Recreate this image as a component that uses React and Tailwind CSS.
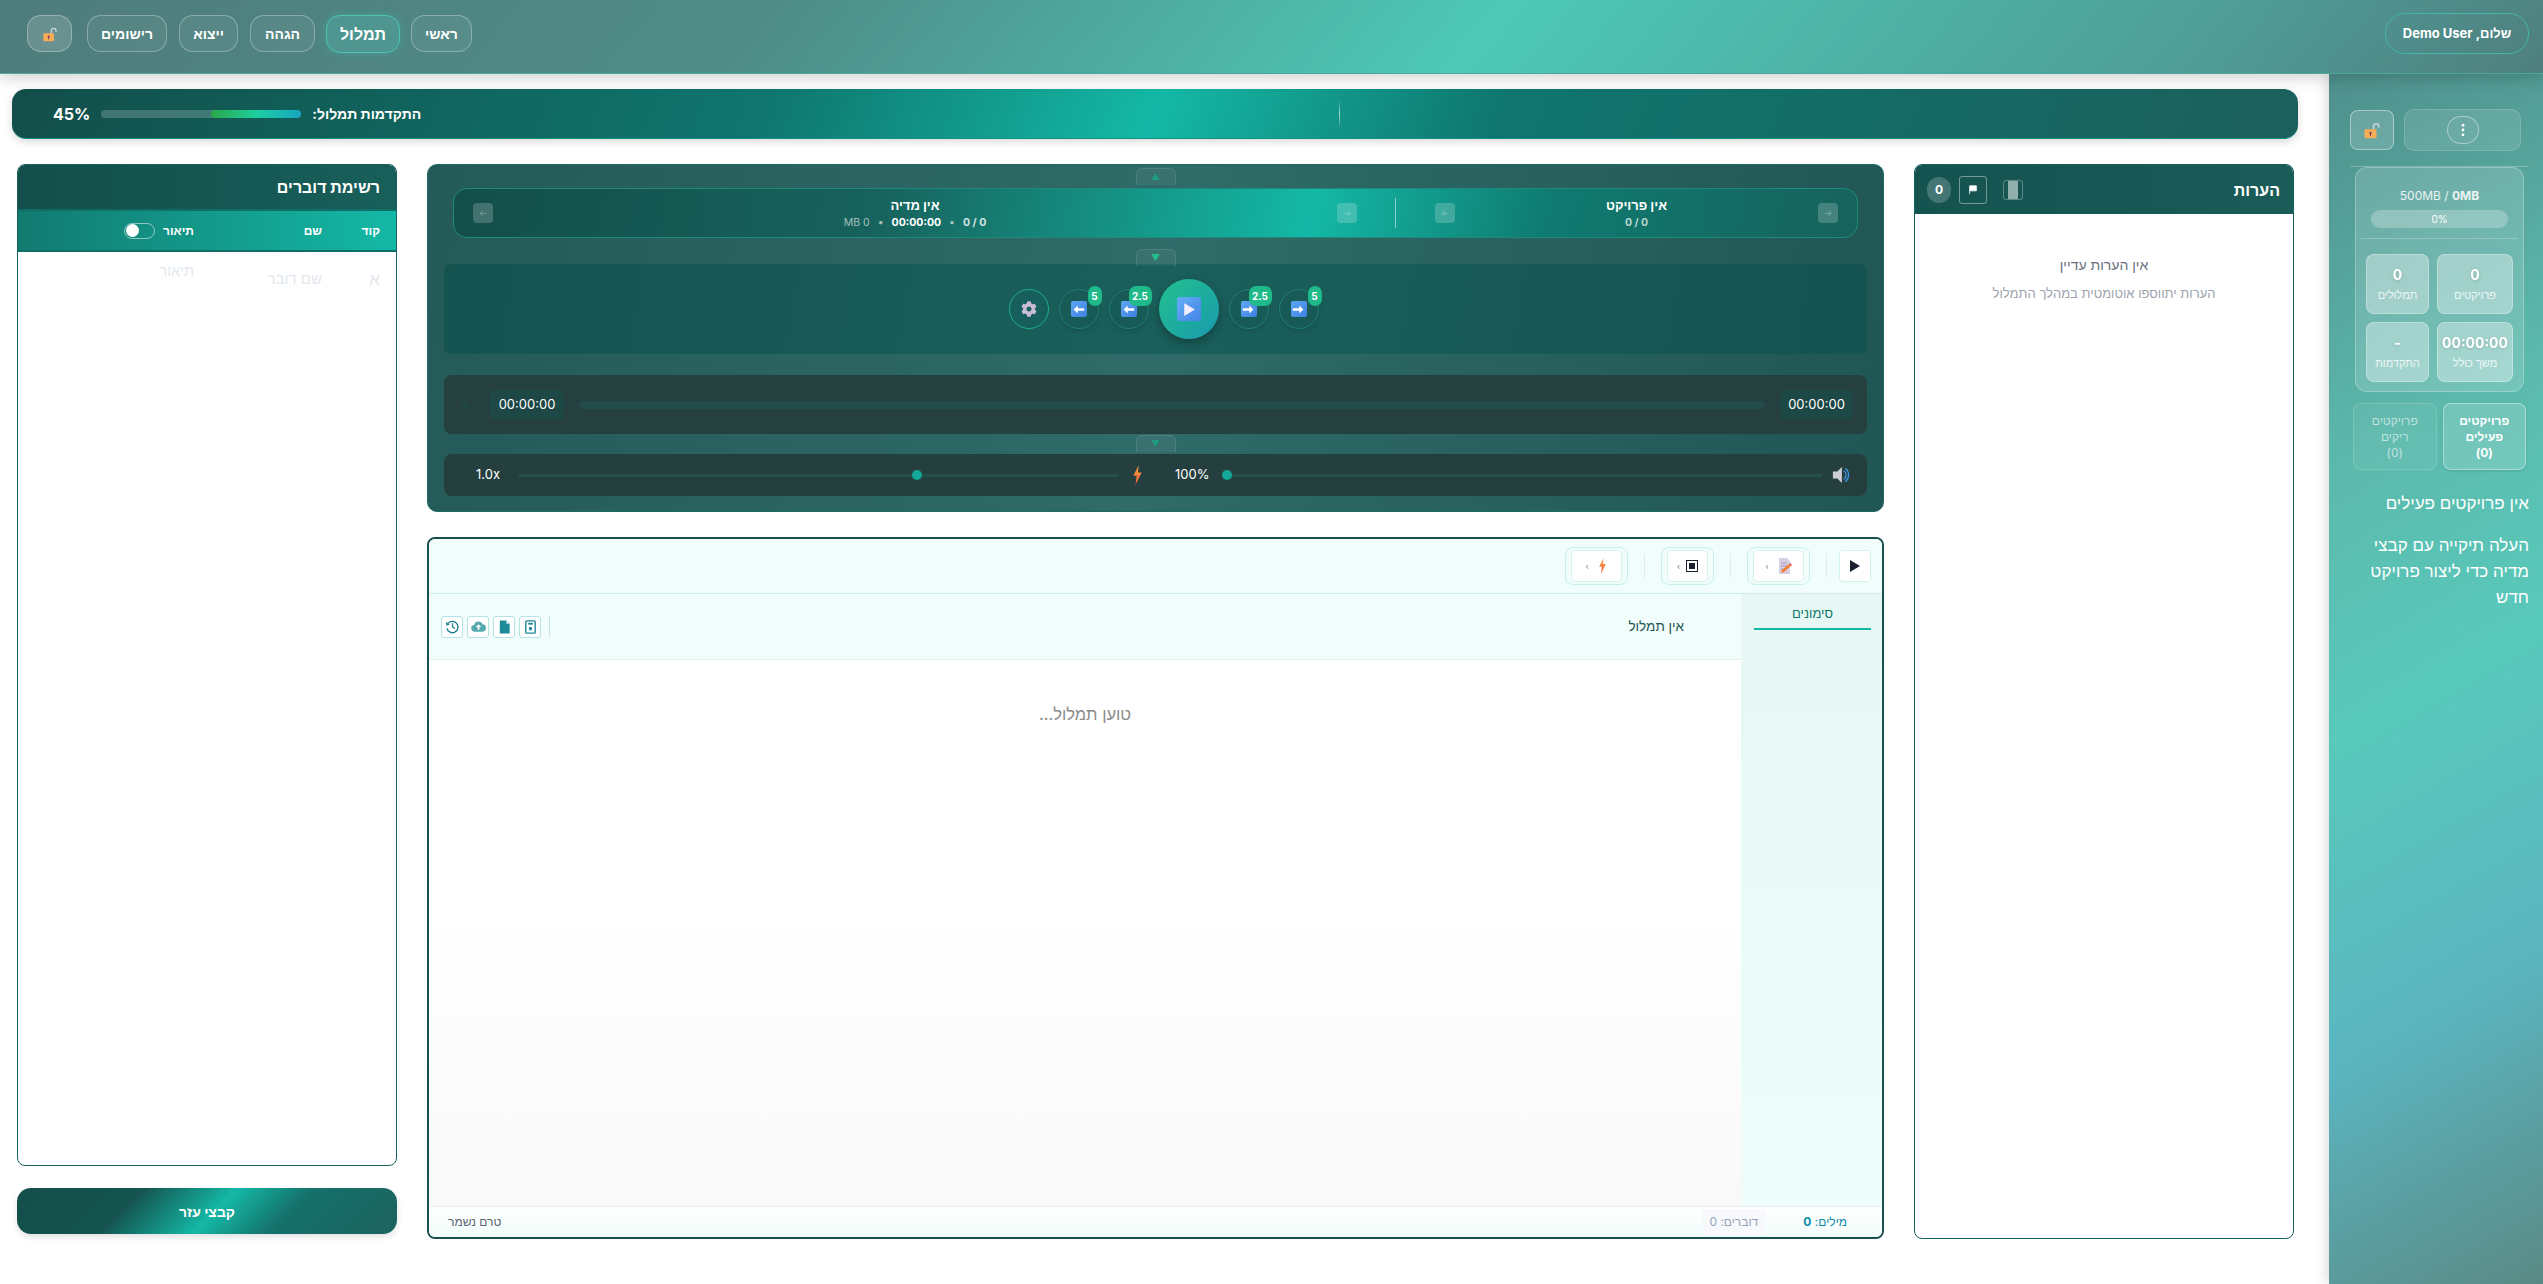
import { FaCog } from "react-icons/fa";

const PLAYER_BTN = "w-[40px] h-[40px] rounded-full flex items-center justify-center";

function UnlockIcon({ className }) {
  return (
    <svg viewBox="0 0 24 24" className={className}>
      <path d="M14 11V7a3.5 3.5 0 0 1 7 0v2" fill="none" stroke="#cbd5e1" strokeWidth="2" />
      <rect x="2" y="11" width="16" height="12" rx="1.5" fill="#f6ad55" />
      <circle cx="10" cy="16" r="1.6" fill="#7c3f58" />
      <rect x="9.3" y="16" width="1.4" height="4" fill="#7c3f58" />
    </svg>
  );
}

function BlueKey({ dir = "left" }) {
  return (
    <span className="w-4 h-4 rounded-[2px] bg-gradient-to-br from-[#5fa8f5] to-[#3f7fe0] flex items-center justify-center">
      <svg viewBox="0 0 16 16" className="w-[13px] h-[13px]">
        {dir === "left" ? (
          <path d="M7 3 2 8l5 5v-3.5h8v-3H7z" fill="#fff" />
        ) : (
          <path d="M9 3l5 5-5 5V9.500H1v-3h8z" fill="#fff" />
        )}
      </svg>
    </span>
  );
}

function Bolt({ className }) {
  return (
    <svg viewBox="0 0 12 24" className={className}>
      <defs>
        <linearGradient id="bolt" x1="0" y1="0" x2="0" y2="1">
          <stop offset="0" stopColor="#f9a03f" />
          <stop offset="1" stopColor="#f0603a" />
        </linearGradient>
      </defs>
      <path d="M7.500 0 1 13h4l-1.500 11L11 9H6.500z" fill="url(#bolt)" />
    </svg>
  );
}

function NavButton({ label, width }) {
  return (
    <button className={`h-[37px] ${width} rounded-[14px] bg-white/5 border border-white/30 text-white font-semibold text-[14px]`}>
      {label}
    </button>
  );
}

function Header() {
  return (
    <header className="h-[74px] shrink-0 flex items-center justify-between pl-[27px] pr-[14px] pb-[6px] bg-[linear-gradient(130deg,#4f7c7c_0%,#4f8c88_30%,#4dc9b6_58%,#4f9f98_85%,#4f7f7f_100%)] border-b border-[#4aa89c] shadow-[0_4px_14px_rgba(0,0,0,0.18)] relative z-20">
      <div className="h-[41px] w-[144px] rounded-[20px] border border-[#45b5a6] flex items-center justify-center text-white text-[13px] font-bold">
        שלום, Demo User
      </div>
      <div className="flex items-center gap-[12px]">
        <NavButton label="ראשי" width="w-[61px]" />
        <button className="h-[38px] w-[74px] -mx-[1px] rounded-[14px] bg-[#4e968f] border border-[#4cc3b3] text-white font-bold text-[16px] shadow-[0_0_10px_rgba(60,200,180,0.35)]">
          תמלול
        </button>
        <NavButton label="הגהה" width="w-[65px]" />
        <NavButton label="ייצוא" width="w-[59px]" />
        <NavButton label="רישומים" width="w-[80px]" />
        <button className="w-[45px] h-[37px] mr-[3px] rounded-[14px] bg-white/15 border border-white/30 flex items-center justify-center">
          <UnlockIcon className="w-[16px] h-[16px]" />
        </button>
      </div>
    </header>
  );
}

function ProgressBar() {
  return (
    <div className="h-[50px] shrink-0 rounded-[14px] bg-[linear-gradient(110deg,#134e4a_0%,#0f766e_33%,#14b8a6_50%,#0f766e_65%,#1c5f5c_100%)] border-b border-[#0f9080] shadow-[0_3px_8px_rgba(0,0,0,0.15)] flex items-center justify-between pl-[41px] relative">
      <span className="w-px h-[28px] mr-[958px] bg-[linear-gradient(180deg,transparent,#ffffffaa,transparent)]" />
      <div className="flex items-center gap-[11px] text-white">
        <span className="font-bold text-[14px]">התקדמות תמלול:</span>
        <div className="w-[200px] h-2 rounded-full bg-white/20 flex justify-end overflow-hidden" dir="ltr">
          <div className="w-[45%] h-full rounded-full bg-[linear-gradient(90deg,#2ba84a,#1dcf9f,#17a5c0)]" />
        </div>
        <span className="font-bold text-[16px]">45%</span>
      </div>
    </div>
  );
}

function Notes() {
  return (
    <section className="w-[380px] h-full flex flex-col rounded-[8px] border border-[#17625c] bg-white overflow-hidden">
      <div className="h-[49px] shrink-0 bg-[linear-gradient(90deg,#155350,#1a5c58)] flex items-center justify-between pr-[13px] pl-[12px] text-white">
        <span className="font-bold text-[16px]">הערות</span>
        <div className="flex items-center gap-[16px]">
          <span className="w-[20px] h-[20px] rounded-[3px] border border-white/30 flex items-center justify-center">
            <span className="w-[10px] h-[18px] rounded-[1px] bg-[#8fb0ad]" />
          </span>
          <div className="flex items-center gap-[8px]">
            <span className="w-[28px] h-[28px] border border-white/40 rounded-[3px] flex items-center justify-center">
              <svg viewBox="0 0 12 12" className="w-[10px] h-[10px]">
                <path d="M2 1v10M2 1h8v6H2" fill="#fff" stroke="#fff" />
              </svg>
            </span>
            <span className="w-[24px] h-[26px] rounded-full bg-white/20 flex items-center justify-center text-[12px] font-bold">0</span>
          </div>
        </div>
      </div>
      <div className="flex flex-col items-center pt-[41px] gap-[9px]">
        <span className="text-[#6b7280] text-[14px] leading-[20px]">אין הערות עדיין</span>
        <span className="text-[#9ca3af] text-[13px] leading-[18px]">הערות יתווספו אוטומטית במהלך התמלול</span>
      </div>
    </section>
  );
}

function NavSmall({ arrow }) {
  return (
    <span className="w-[20px] h-[20px] shrink-0 rounded-[4px] bg-white/20 flex items-center justify-center text-white/30 text-[9px]">{arrow}</span>
  );
}

function Tab({ top, arrow, className }) {
  return (
    <span className={`absolute left-1/2 -translate-x-1/2 w-[40px] h-[17px] rounded-t-[6px] bg-white/5 border border-b-0 border-white/10 flex items-center justify-center text-[9px] z-10 ${top} ${className}`}>
      {arrow}
    </span>
  );
}

function SkipButton({ badge, dir, wide }) {
  return (
    <div className={`relative ${PLAYER_BTN} border border-[#1f7f74] bg-[#175a56] shadow-[0_2px_5px_rgba(0,0,0,0.12)]`}>
      <BlueKey dir={dir} />
      <span className={`absolute -top-[4px] -right-[4px] h-[20px] ${wide ? "w-[23px] rounded-[7px]" : "w-[14px] rounded-[7px]"} bg-[#20b98a] text-white text-[10px] font-bold flex items-center justify-center`}>
        {badge}
      </span>
    </div>
  );
}

function Player() {
  return (
    <section className="h-[348px] shrink-0 rounded-[10px] bg-[linear-gradient(100deg,#245a58_0%,#2f6b68_50%,#205654_100%)] border border-[#1f6a62] pt-[23px] px-[16px] relative flex flex-col">
      <Tab top="top-[3px]" arrow="▲" className="text-[#1d9a80]" />
      <Tab top="top-[84px]" arrow="▼" className="text-[#1fbf8f]" />
      <Tab top="top-[270px]" arrow="▼" className="text-[#1d9a80]" />

      <div className="h-[50px] mx-[9px] shrink-0 rounded-[14px] border border-[#1f8a7c] bg-[linear-gradient(100deg,#134e4a_0%,#17625c_30%,#14a090_52%,#14b8a6_61%,#0f7a70_78%,#17625c_100%)] flex items-center text-white">
        <div className="w-[461px] shrink-0 flex items-center pr-[19px] pl-[39px]">
          <NavSmall arrow="→" />
          <div className="flex-1 flex flex-col items-center">
            <span className="font-bold text-[13px] leading-[20px]">אין פרויקט</span>
            <span className="text-[10.500px] leading-[16px] font-bold text-white/70">0 / 0</span>
          </div>
          <NavSmall arrow="←" />
        </div>
        <div className="w-px h-[30px] bg-white/50" />
        <div className="flex-1 flex items-center pr-[38px] pl-[19px]">
          <NavSmall arrow="→" />
          <div className="flex-1 flex flex-col items-center">
            <span className="font-bold text-[13px] leading-[20px]">אין מדיה</span>
            <span className="text-[10.500px] leading-[16px] text-white/60 flex gap-2" dir="ltr">
              <span>MB 0</span><span>•</span><b className="text-white">00:00:00</b><span>•</span><b className="text-white/80">0 / 0</b>
            </span>
          </div>
          <NavSmall arrow="←" />
        </div>
      </div>

      <div className="mt-[26px] h-[90px] shrink-0 rounded-[6px] bg-[linear-gradient(100deg,#155350,#1a5f5b,#155350)] flex items-center justify-center gap-[10px] pl-[16px]" dir="ltr">
        <div className={`${PLAYER_BTN} border border-[#1fae8a] bg-[#175f5c]`}>
          <FaCog className="w-[16px] h-[16px] text-[#c8bcd6]" />
        </div>
        <SkipButton badge="5" dir="left" />
        <SkipButton badge="2.5" dir="left" wide />
        <div className="w-[60px] h-[60px] rounded-full bg-[linear-gradient(135deg,#22c08c,#1a9ab0)] shadow-[0_4px_10px_rgba(0,0,0,0.3)] flex items-center justify-center">
          <span className="w-[24px] h-[24px] rounded-[3px] bg-gradient-to-br from-[#65aef7] to-[#4583e6] flex items-center justify-center">
            <svg viewBox="0 0 16 16" className="w-[17px] h-[17px]"><path d="M4 2l10 6-10 6z" fill="#f4eefc" /></svg>
          </span>
        </div>
        <SkipButton badge="2.5" dir="right" wide />
        <SkipButton badge="5" dir="right" />
      </div>

      <div className="mt-[21px] shrink-0 h-[59px] rounded-[8px] bg-[#263f3f] flex items-center pl-[18px] pr-[14px]" dir="ltr">
        <span className="w-[6px] h-[6px] rounded-full bg-[#1d4845] mr-[22px]" />
        <span className="h-[29px] w-[74px] rounded-[4px] bg-[#1d4845] text-white text-[13px] flex items-center justify-center">00:00:00</span>
        <div className="flex-1 mx-[15px] h-2 rounded-full bg-[#224b49]" />
        <span className="h-[29px] w-[73px] rounded-[4px] bg-[#1d4845] text-white text-[13px] flex items-center justify-center">00:00:00</span>
      </div>

      <div className="mt-[20px] h-[42px] shrink-0 rounded-[8px] bg-[#253f3f] flex items-center pl-[32px] text-white" dir="ltr">
        <span className="text-[13px] w-[25px]">1.0x</span>
        <div className="relative ml-[18px] w-[600px] h-[3px] bg-[#22504c]">
          <span className="absolute left-[393px] -top-[3.500px] w-[10px] h-[10px] rounded-full bg-[#14a89a]" />
        </div>
        <Bolt className="w-[11px] h-[20px] ml-[13px]" />
        <span className="text-[13px] ml-[32px] w-[33px]">100%</span>
        <div className="relative ml-[14px] w-[600px] h-[3px] bg-[#22504c]">
          <span className="absolute left-0 -top-[3.500px] w-[10px] h-[10px] rounded-full bg-[#14a89a]" />
        </div>
        <svg viewBox="0 0 20 20" className="w-[20px] h-[18px] ml-[9px]">
          <path d="M1 6h5l5-5v18l-5-5H1z" fill="#cfcdd6" />
          <path d="M13 5a6 6 0 0 1 0 10M15 2.500a10 10 0 0 1 0 15" fill="none" stroke="#3b93e8" strokeWidth="1.400" />
        </svg>
      </div>
    </section>
  );
}

function ToolGroup({ children, outer = "w-[63px]", gap = "gap-[8px]" }) {
  return (
    <span className={`${outer} h-[38px] rounded-[8px] border border-[#c9efe9] p-[2px_5px] flex shrink-0`}>
      <span className={`flex-1 rounded-[4px] bg-white border border-[#d5f3ee] flex items-center justify-center ${gap}`} dir="ltr">
        <span className="text-[8px] text-[#777] leading-none">‹</span>
        {children}
      </span>
    </span>
  );
}

function ToolSep() {
  return <span className="w-px h-[24px] bg-[#d5efeb] shrink-0" />;
}

function EditIcon({ children }) {
  return (
    <span className="w-[22px] h-[22px] rounded-[3px] border border-[#b5e2e4] bg-white flex items-center justify-center">
      {children}
    </span>
  );
}

function Editor() {
  return (
    <section className="mt-[25px] flex-1 min-h-0 rounded-[8px] border-2 border-[#17504c] flex flex-col overflow-hidden bg-white">
      <div className="h-[55px] shrink-0 bg-[#f0fdfb] border-b border-[#cdeee9] flex items-center gap-[16px] pr-[11px]">
        <span className="w-[32px] h-[32px] -ml-[4px] rounded-[4px] bg-white border border-[#d5f3ee] flex items-center justify-center">
          <svg viewBox="0 0 12 14" className="w-[12px] h-[14px]"><path d="M1 1l10 6-10 6z" fill="#1a2230" /></svg>
        </span>
        <ToolSep />
        <ToolGroup>
          <svg viewBox="0 0 15 16" className="w-[15px] h-[16px]">
            <path d="M2 0h8l3 3v13H2z" fill="#d8cfe4" />
            <path d="M4 5h6M4 8h6M4 11h3" stroke="#a79bb8" strokeWidth="1" />
            <path d="M4 15l1-3 7-6 2 2-7 6z" fill="#f08030" />
            <path d="M12 6l2 2 1-1-2-2z" fill="#e8485a" />
          </svg>
        </ToolGroup>
        <ToolSep />
        <ToolGroup outer="w-[53px]" gap="gap-[6px]">
          <span className="w-[12px] h-[12px] border border-[#1a2230] flex items-center justify-center">
            <span className="w-[6px] h-[6px] bg-[#1a2230]" />
          </span>
        </ToolGroup>
        <ToolSep />
        <ToolGroup><Bolt className="w-[11px] h-[16px]" /></ToolGroup>
      </div>
      <div className="flex-1 min-h-0 flex">
        <aside className="w-[141px] shrink-0 bg-[linear-gradient(180deg,#e6f7f4,#eafbf8_60%,#eefdfa)] pr-[11px] pl-[13px]">
          <div className="h-[36px] pt-[6px] border-b-2 border-[#14b8a6] flex items-center justify-center text-[#0f766e] text-[13px]">סימונים</div>
        </aside>
        <div className="flex-1 flex flex-col min-w-0">
          <div className="h-[66px] shrink-0 bg-[#f0fdfb] border-b border-[#e2f0f0] flex items-center justify-between pr-[57px] pl-[12px]">
            <span className="text-[#1f5752] text-[13.500px]">אין תמלול</span>
            <div className="flex items-center gap-[4px]" dir="ltr">
              <EditIcon>
                <svg viewBox="0 0 16 16" className="w-[15px] h-[15px]">
                  <path d="M3 5a6 6 0 1 1-1 5" fill="none" stroke="#1a7f8a" strokeWidth="1.500" />
                  <path d="M1 3l.5 4 3.500-1z" fill="#1a7f8a" />
                  <path d="M8 4.500V8.500l2.500 1.500" fill="none" stroke="#1a7f8a" strokeWidth="1.300" />
                </svg>
              </EditIcon>
              <EditIcon>
                <svg viewBox="0 0 16 16" className="w-[15px] h-[15px]">
                  <path d="M4 13.500a3.500 3.500 0 0 1-.5-7 4.500 4.500 0 0 1 8.700-.8A3.800 3.800 0 0 1 12 13.500z" fill="#57a8ad" />
                  <path d="M8 5.500l-3 3h2v3h2v-3h2z" fill="#fff" />
                </svg>
              </EditIcon>
              <EditIcon>
                <svg viewBox="0 0 16 16" className="w-[15px] h-[16px]"><path d="M3 1h7l3.500 3.500V15H3z" fill="#1d8a98" /><path d="M10 1v3.500h3.500z" fill="#d8f1f3" /></svg>
              </EditIcon>
              <EditIcon>
                <svg viewBox="0 0 16 16" className="w-[15px] h-[16px]"><rect x="3" y="1.500" width="10" height="13" rx="1" fill="none" stroke="#1d8a98" strokeWidth="1.500" /><rect x="5.500" y="3.500" width="5" height="2" fill="#1d8a98" /><rect x="6.500" y="8" width="3" height="3.500" fill="#1d8a98" /></svg>
              </EditIcon>
              <span className="w-px h-[21px] bg-[#c5e8e4] ml-[4px]" />
            </div>
          </div>
          <div className="flex-1 min-h-0 bg-[linear-gradient(180deg,#ffffff_0%,#ffffff_45%,#f9f9f9_100%)] flex justify-center pt-[44px]">
            <span className="text-[#8b8b8b] text-[16.500px] leading-[20px]">טוען תמלול...</span>
          </div>
        </div>
      </div>
      <div className="h-[31px] shrink-0 bg-[linear-gradient(180deg,#fff,#f0fdfb)] border-t border-[#e2eeee] flex items-center justify-between pr-[35px] pl-[19px] text-[12px]">
        <div className="flex items-center gap-[38px]">
          <span className="text-[#0f8aa8]">מילים: <span className="font-bold">0</span></span>
          <span className="text-[#94a3b8] bg-[#f7f9fc] h-[26px] w-[63px] flex items-center justify-center">דוברים: 0</span>
        </div>
        <span className="text-[#5b6472]">טרם נשמר</span>
      </div>
    </section>
  );
}

function Speakers() {
  return (
    <div className="w-[380px] h-[1070px] shrink-0 flex flex-col">
      <section className="flex-1 min-h-0 rounded-[8px] border border-[#17625c] bg-white overflow-hidden flex flex-col">
        <div className="h-[44px] shrink-0 bg-[linear-gradient(90deg,#134e4a,#185f5a)] flex items-center pr-[16px] text-white font-bold text-[16px]">רשימת דוברים</div>
        <div className="h-[43px] shrink-0 bg-[linear-gradient(90deg,#127a70,#14b8a6)] border-y-2 border-[#0f6f66] flex items-center text-white text-[12px] font-semibold pr-[16px]">
          <span className="w-[58px]">קוד</span>
          <span className="w-[128px]">שם</span>
          <span className="ml-[8px]">תיאור</span>
          <span className="w-[31px] h-[16px] rounded-full border border-white/50 flex items-center justify-end px-px">
            <span className="w-[13px] h-[13px] rounded-full bg-white" />
          </span>
        </div>
        <div className="flex pr-[16px] text-[#e2e8f0]">
          <span className="w-[58px] pt-[15px] text-[17px] leading-[24px]">א</span>
          <span className="w-[128px] pt-[15px] text-[15px] leading-[24px]">שם דובר</span>
          <span className="pt-[9px] text-[14.500px] leading-[20px]">תיאור</span>
        </div>
      </section>
      <button className="mt-[22px] h-[46px] shrink-0 rounded-[14px] bg-[linear-gradient(135deg,#134e4a_0%,#155450_30%,#14b8a6_52%,#15706a_70%,#1d625e_100%)] text-white text-[14px] font-bold shadow-[0_3px_6px_rgba(0,0,0,0.12)]">
        קבצי עזר
      </button>
    </div>
  );
}

function StatBox({ value, label }) {
  return (
    <div className="h-[60px] rounded-[8px] bg-white/35 border border-white/30 flex flex-col items-center justify-center gap-[2px]">
      <span className="text-white font-bold text-[14px] leading-[20px] drop-shadow">{value}</span>
      <span className="text-white/80 text-[11px] leading-[16px]">{label}</span>
    </div>
  );
}

function Sidebar() {
  return (
    <aside className="w-[214px] shrink-0 bg-[linear-gradient(150deg,#4f8f8c_0%,#5cb9ac_30%,#58c9bb_50%,#5bb5c0_75%,#5a8a85_100%)] shadow-[-4px_0_10px_rgba(0,0,0,0.12)] pl-[21px] pr-[14px] pt-[35px] text-white relative">
      <div className="flex gap-[10px] items-center pb-[15px] pr-[8px] border-b border-white/25">
        <div className="flex-1 h-[42px] rounded-[10px] bg-white/10 border border-white/15 flex items-center justify-center">
          <span className="w-[32px] h-[28px] rounded-full border border-white/40 bg-white/5 flex items-center justify-center">
            <svg viewBox="0 0 4 16" className="w-[4px] h-[14px]">
              <circle cx="2" cy="2.500" r="1.600" fill="#fff" />
              <circle cx="2" cy="8" r="1.600" fill="#fff" />
              <circle cx="2" cy="13.500" r="1.600" fill="#fff" />
            </svg>
          </span>
        </div>
        <div className="w-[44px] h-[40px] rounded-[8px] bg-white/15 border border-white/40 flex items-center justify-center">
          <UnlockIcon className="w-[18px] h-[18px]" />
        </div>
      </div>
      <div className="mx-[5px] rounded-[12px] bg-white/15 border border-white/25 px-[10px] pt-[20px] pb-[9px]">
        <div className="text-center text-[12px] leading-[16px] text-white/85" dir="ltr">500MB / <b>0MB</b></div>
        <div className="mt-[6px] mx-[5px] h-[18px] rounded-full bg-white/25 flex items-center justify-center text-[10px]">0%</div>
        <div className="-mx-[5px] px-[5px] mt-[10px] pt-[15px] border-t border-white/25 grid grid-cols-[76px_63px] gap-x-[8px] gap-y-[8px]">
          <StatBox value="0" label="פרויקטים" />
          <StatBox value="0" label="תמלולים" />
          <StatBox value="00:00:00" label="משך כולל" />
          <StatBox value="-" label="התקדמות" />
        </div>
      </div>
      <div className="flex gap-[6px] mt-[11px] mx-[3px]">
        <div className="flex-1 h-[67px] rounded-[8px] bg-white/15 border border-white/40 shadow flex flex-col items-center justify-center text-[12px] font-bold leading-[16px] text-center">
          <span>פרויקטים</span><span>פעילים</span><span>(0)</span>
        </div>
        <div className="flex-1 h-[67px] rounded-[8px] bg-white/5 border border-white/15 flex flex-col items-center justify-center text-[12px] leading-[16px] text-white/60 text-center">
          <span>פרויקטים</span><span>ריקים</span><span>(0)</span>
        </div>
      </div>
      <p className="mt-[21px] text-[17px] leading-[24px]">אין פרויקטים פעילים</p>
      <p className="mt-[17px] text-[17px] leading-[26px]">העלה תיקייה עם קבצי מדיה כדי ליצור פרויקט חדש</p>
    </aside>
  );
}

export default function App() {
  return (
    <div dir="rtl" className="w-[2543px] h-[1284px] flex flex-col bg-white overflow-hidden font-['Inter','Noto_Sans',sans-serif]">
      <Header />
      <div className="flex-1 min-h-0 flex">
        <Sidebar />
        <div className="flex-1 min-w-0 flex flex-col pt-[15px] pl-[12px] pr-[31px] pb-[45px]">
          <ProgressBar />
          <div className="flex-1 min-h-0 flex justify-between mt-[25px] pl-[5px] pr-[4px]">
            <Notes />
            <div className="w-[1457px] h-full flex flex-col">
              <Player />
              <Editor />
            </div>
            <Speakers />
          </div>
        </div>
      </div>
    </div>
  );
}
